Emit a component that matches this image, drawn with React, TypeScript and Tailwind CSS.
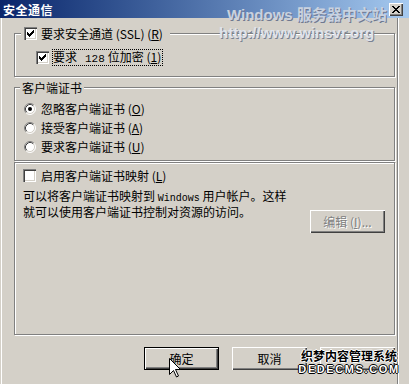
import React from "react";

function Check() {
  const ys = [2, 3, 4, 3, 2, 1, 0];
  return (
    <svg width="7" height="7" viewBox="0 0 7 7" shapeRendering="crispEdges" className="absolute left-[3px] top-[3px]">
      {ys.map((y, i) => (
        <rect key={i} x={i} y={y} width="1" height="3" fill="#000" />
      ))}
    </svg>
  );
}

function CheckBox({ checked }: { checked: boolean }) {
  return (
    <span className="relative block w-[13px] h-[13px] shrink-0 bg-white shadow-[inset_1px_1px_0_#808080,inset_2px_2px_0_#404040,inset_-1px_-1px_0_#fff,inset_-2px_-2px_0_#d4d0c8]">
      {checked && <Check />}
    </span>
  );
}

function Radio({ checked }: { checked: boolean }) {
  return (
    <svg width="12" height="12" viewBox="0 0 12 12" className="shrink-0 block">
      <circle cx="6" cy="6" r="5" fill="#fff" />
      <path d="M2.11 9.89 A5.5 5.5 0 0 1 9.89 2.11" stroke="#808080" fill="none" />
      <path d="M9.89 2.11 A5.5 5.5 0 0 1 2.11 9.89" stroke="#fff" fill="none" />
      <path d="M2.82 9.18 A4.5 4.5 0 0 1 9.18 2.82" stroke="#404040" fill="none" />
      <path d="M9.18 2.82 A4.5 4.5 0 0 1 2.82 9.18" stroke="#d4d0c8" fill="none" />
      {checked && <circle cx="6" cy="6" r="2" fill="#000" />}
    </svg>
  );
}

function CloseGlyph() {
  const rows = [
    "xx....xx",
    ".xx..xx.",
    "..xxxx..",
    "...xx...",
    "..xxxx..",
    ".xx..xx.",
    "xx....xx",
  ];
  return (
    <svg width="8" height="7" viewBox="0 0 8 7" shapeRendering="crispEdges">
      {rows.flatMap((r, y) =>
        r.split("").map((c, x) =>
          c === "x" ? <rect key={`${x}-${y}`} x={x} y={y} width="1" height="1" fill="#000" /> : null
        )
      )}
    </svg>
  );
}

function U({ children }: { children: React.ReactNode }) {
  return <span className="underline decoration-1 underline-offset-[1px]">{children}</span>;
}

const BTN = "shadow-[inset_1px_1px_0_#fff,inset_-1px_-1px_0_#404040,inset_-2px_-2px_0_#808080]";

export default function App() {
  return (
    <div className="relative w-[409px] h-[384px] overflow-hidden bg-[#d4d0c8] text-[12px] leading-[13px] text-black font-['Noto_Sans_CJK_SC','Noto_Sans',sans-serif]">
      {/* Title bar */}
      <div className="h-[18px] flex items-center bg-linear-to-r from-[#0a246a] to-[#a6caf0] pl-[3px] pr-[6px]">
        <span className="text-white font-bold text-[12px] leading-[13px] tracking-[0.5px]">安全通信</span>
        <div className="ml-auto w-[14px] h-[13px] bg-[#d4d0c8] flex items-center justify-center shadow-[inset_1px_1px_0_#fff,inset_-1px_-1px_0_#404040,inset_-2px_-2px_0_#808080]">
          <CloseGlyph />
        </div>
      </div>

      {/* Body */}
      <div className="flex h-[366px]">
        <div className="w-px bg-[#d4d0c8]" />
        <div className="w-px bg-white" />
        <div className="w-[395px] pl-[12px] pt-[15px] flex flex-col">
          {/* Group 1 */}
          <div className="relative w-[381px] h-[44px] shrink-0 border border-[#808080] shadow-[inset_1px_1px_0_#fff,1px_1px_0_#fff] pl-[21px] pt-[15px]">
            <div className="absolute left-[6px] -top-[7px] h-[13px] flex items-center bg-[#d4d0c8] pl-[3px] pr-[7px]">
              <CheckBox checked />
              <span className="ml-[4px] whitespace-nowrap">
                要求安全通道 (SSL) (<U>R</U>)
              </span>
            </div>
            <div className="h-[17px] flex items-center">
              <CheckBox checked />
              <span className="ml-[3px] h-[17px] pr-[1px] flex items-center border border-dotted border-black">
                <span className="whitespace-nowrap leading-[13px]">
                  要求<span className="ml-[8px] mr-[3px] font-['Liberation_Mono',monospace] text-[11px]">128</span>
                  位加密 (<U>1</U>)
                </span>
              </span>
            </div>
          </div>

          {/* Group 2 */}
          <div className="relative mt-[10px] w-[381px] h-[74px] shrink-0 border border-[#808080] shadow-[inset_1px_1px_0_#fff,1px_1px_0_#fff] pl-[9px] pt-[11px]">
            <div className="absolute left-[5px] -top-[7px] h-[13px] flex items-center bg-[#d4d0c8] px-[2px]">
              客户端证书
            </div>
            <div className="h-[19px] flex items-center">
              <Radio checked />
              <span className="ml-[5px]">忽略客户端证书 (<U>O</U>)</span>
            </div>
            <div className="h-[19px] flex items-center">
              <Radio checked={false} />
              <span className="ml-[5px]">接受客户端证书 (<U>A</U>)</span>
            </div>
            <div className="h-[19px] flex items-center">
              <Radio checked={false} />
              <span className="ml-[5px]">要求客户端证书 (<U>U</U>)</span>
            </div>
          </div>

          {/* Group 3 */}
          <div className="relative mt-[1px] w-[381px] h-[173px] shrink-0 border border-[#808080] shadow-[inset_1px_1px_0_#fff,1px_1px_0_#fff] pl-[8px] pr-[9px] pt-[6px] flex flex-col">
            <div className="h-[13px] flex items-center">
              <CheckBox checked={false} />
              <span className="ml-[5px]">启用客户端证书映射 (<U>L</U>)</span>
            </div>
            <p className="mt-[7px] leading-[13px] whitespace-nowrap">
              可以将客户端证书映射到 <span className="font-['Liberation_Mono',monospace] text-[10px]">Windows</span> 用户帐户。这样
              <br />
              就可以使用客户端证书控制对资源的访问。
            </p>
            <div className={`-mt-[8px] self-end w-[75px] h-[23px] flex items-center justify-center text-[#808080] [text-shadow:1px_1px_0_#fff] ${BTN}`}>
              <span className="whitespace-nowrap">
                编辑 (<U>I</U>)...
              </span>
            </div>
          </div>

          {/* Buttons */}
          <div className="mt-[12px] ml-[130px] flex gap-[13px]">
            <div className={`w-[75px] h-[23px] border border-black flex items-center justify-center ${BTN}`}>
              确定
            </div>
            <div className={`w-[75px] h-[23px] flex items-center justify-center ${BTN}`}>
              取消
            </div>
            <div className={`w-[75px] h-[23px] flex items-center justify-center ${BTN}`} />
          </div>
        </div>
        <div className="w-px bg-[#808080]" />
        <div className="w-px bg-white" />
      </div>

      {/* Top watermark */}
      <div className="absolute left-[227px] top-[6px] whitespace-nowrap text-[15px] leading-[17px] font-bold font-['Liberation_Sans','Noto_Sans_CJK_SC',sans-serif] text-[#c9d2e0] [text-shadow:1px_1px_0_#6f7890]">
        Windows 服务器中文站
      </div>
      <div className="absolute left-[219px] top-[24px] whitespace-nowrap text-[15px] leading-[17px] font-bold font-['Liberation_Sans',sans-serif] text-[#dfe3ea] [text-shadow:1px_1px_0_#7a8294]">
        http://www.winsvr.org
      </div>

      {/* Bottom watermark */}
      <div className="absolute left-[300px] top-[349px] flex flex-col items-center w-[98px]">
        <span className="whitespace-nowrap text-[12px] leading-[14px] font-bold text-black [text-shadow:1px_0_0_#fff,-1px_0_0_#fff,0_1px_0_#fff,0_-1px_0_#fff]">
          织梦内容管理系统
        </span>
        <span className="whitespace-nowrap text-[11px] leading-[12px] font-bold font-['Liberation_Sans',sans-serif] tracking-[1.6px] text-white [text-shadow:1px_0_0_#000,-1px_0_0_#000,0_1px_0_#000,0_-1px_0_#000]">
          DEDECMS.COM
        </span>
      </div>

      {/* Mouse cursor */}
      <svg className="absolute left-[169px] top-[358px]" width="12" height="20" viewBox="0 0 12 20">
        <path d="M0.5 0.5 L0.5 16.5 L4.5 12.5 L7.5 19 L9.5 18 L6.5 11.5 L11.5 11.5 Z" fill="#fff" stroke="#000" />
      </svg>
    </div>
  );
}
